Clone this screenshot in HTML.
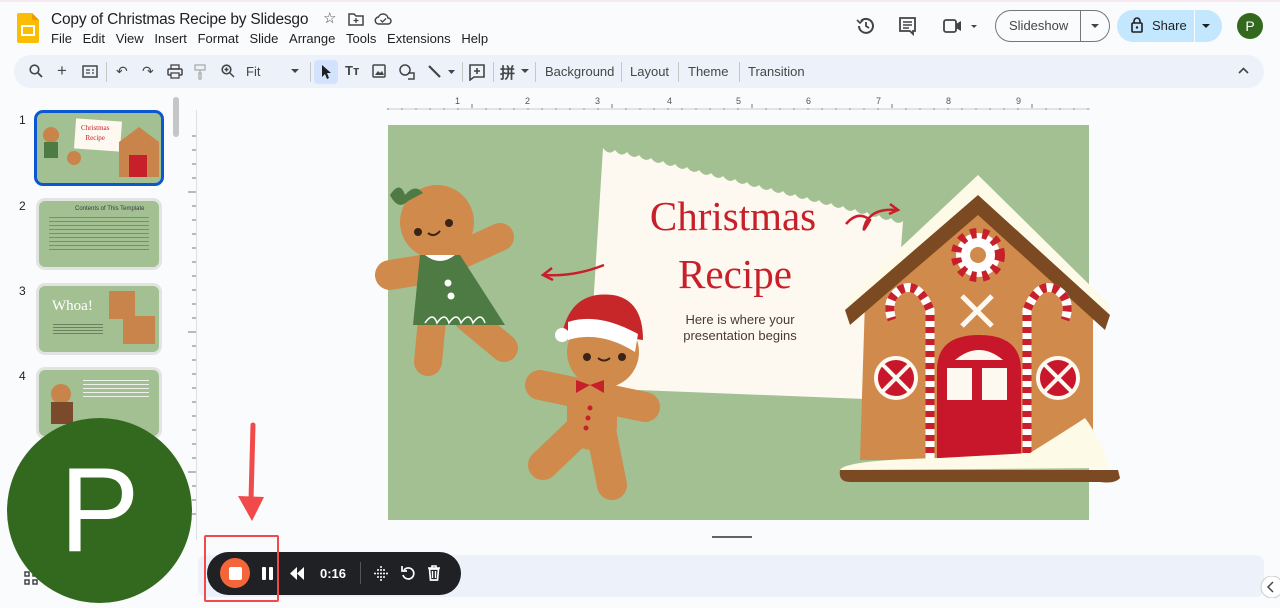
<!DOCTYPE html>
<html><head><meta charset="utf-8"><style>
*{margin:0;padding:0;box-sizing:border-box}
body{width:1280px;height:608px;overflow:hidden;background:#f9fbfd;font-family:"Liberation Sans",Arial,sans-serif;position:relative;color:#1f1f1f}
.a{position:absolute}
.menu span{margin-right:10.7px}
.tb{font-size:13px;color:#444746}
.sep{position:absolute;top:62px;width:1px;height:20px;background:#c7c7c7}
.rn{position:absolute;top:96px;font-size:9px;color:#555}
</style></head><body>
<div class="a" style="left:0;top:0;width:1280px;height:2px;background:#f6e8ee"></div>
<svg class="a" style="left:17px;top:13px" width="22" height="30" viewBox="0 0 22 30"><path d="M2 0h13l7 7v21a2 2 0 0 1-2 2H2a2 2 0 0 1-2-2V2a2 2 0 0 1 2-2z" fill="#fbbc04"/><path d="M15 0l7 7h-5a2 2 0 0 1-2-2z" fill="#f29900"/><rect x="5" y="13" width="12" height="9" fill="none" stroke="#fff" stroke-width="2"/></svg>
<div class="a" style="left:51px;top:11px;font-size:15.5px;letter-spacing:-0.2px">Copy of Christmas Recipe by Slidesgo</div>
<div class="a" style="left:323px;top:9px;font-size:15px;color:#444">☆</div>
<svg class="a" style="left:348px;top:12px" width="16" height="14"><path d="M1 2h5l2 2h7v9H1z" fill="none" stroke="#444" stroke-width="1.5"/><path d="M8 6v5M5.5 8.5h5" stroke="#444" stroke-width="1.3"/></svg>
<svg class="a" style="left:374px;top:12px" width="18" height="14"><path d="M5 12h9a3 3 0 0 0 0-6 5 5 0 0 0-9.5-1A3.5 3.5 0 0 0 5 12z" fill="none" stroke="#444" stroke-width="1.5"/><path d="M6.5 8l2 2 3.5-3.5" fill="none" stroke="#444" stroke-width="1.3"/></svg>
<div class="a menu" style="left:51px;top:31px;font-size:13px;white-space:nowrap"><span>File</span><span>Edit</span><span>View</span><span>Insert</span><span>Format</span><span>Slide</span><span>Arrange</span><span>Tools</span><span>Extensions</span><span>Help</span></div>
<svg class="a" style="left:856px;top:16px" width="20" height="20" viewBox="0 0 20 20"><path d="M3 10a7 7 0 1 0 2-5" fill="none" stroke="#444" stroke-width="2"/><path d="M1 4l3 3 3-3" fill="none" stroke="#444" stroke-width="1.6"/><path d="M10 6v4l3 2" fill="none" stroke="#444" stroke-width="1.8"/></svg>
<svg class="a" style="left:898px;top:16px" width="20" height="20"><path d="M2 2h15v13h-2v3l-3-3H2z" fill="none" stroke="#444" stroke-width="1.8"/><path d="M5 6h9M5 9h9M5 12h6" stroke="#444" stroke-width="1.5"/></svg>
<svg class="a" style="left:942px;top:17px" width="36" height="18"><rect x="2" y="3" width="12" height="12" rx="2" fill="none" stroke="#444" stroke-width="1.8"/><path d="M14 7l5-3v10l-5-3" fill="#444"/><path d="M29 8l3 3 3-3z" fill="#444"/></svg>
<div class="a" style="left:995px;top:10px;width:115px;height:32px;border:1px solid #747775;border-radius:16px"></div>
<div class="a" style="left:1080px;top:10px;width:1px;height:32px;background:#747775"></div>
<div class="a" style="left:1009px;top:18px;font-size:13px;color:#444746">Slideshow</div>
<svg class="a" style="left:1090px;top:23px" width="10" height="6"><path d="M1 1h8L5 5z" fill="#444"/></svg>
<div class="a" style="left:1117px;top:10px;width:105px;height:32px;background:#c2e7ff;border-radius:16px"></div>
<div class="a" style="left:1194px;top:10px;width:1px;height:32px;background:#f9fbfd"></div>
<svg class="a" style="left:1131px;top:17px" width="12" height="16"><rect x="1" y="6" width="10" height="9" rx="1" fill="none" stroke="#1f1f1f" stroke-width="1.6"/><path d="M3 6V4a3 3 0 0 1 6 0v2" fill="none" stroke="#1f1f1f" stroke-width="1.6"/><circle cx="6" cy="10.5" r="1.2" fill="#1f1f1f"/></svg>
<div class="a" style="left:1152px;top:18px;font-size:13px;color:#1f1f1f">Share</div>
<svg class="a" style="left:1201px;top:23px" width="10" height="6"><path d="M1 1h8L5 5z" fill="#1f1f1f"/></svg>
<div class="a" style="left:1237px;top:13px;width:26px;height:26px;border-radius:50%;background:#33691e;color:#fff;font-size:14px;text-align:center;line-height:26px">P</div>
<!-- toolbar -->
<div class="a" style="left:14px;top:55px;width:1250px;height:33px;background:#edf2fa;border-radius:17px"></div>
<div class="a" style="left:314px;top:60px;width:24px;height:24px;background:#d3e3fd;border-radius:4px"></div>
<svg class="a" style="left:29px;top:64px" width="14" height="14"><circle cx="5.5" cy="5.5" r="4.3" fill="none" stroke="#444" stroke-width="1.6"/><path d="M9 9l4 4" stroke="#444" stroke-width="1.8"/></svg>
<div class="a tb" style="left:57px;top:61px;font-size:17px">+</div>
<svg class="a" style="left:82px;top:65px" width="16" height="13"><rect x="1" y="1" width="14" height="11" fill="none" stroke="#444" stroke-width="1.5"/><path d="M4 5h4M4 8h4M10 5h2M10 8h2" stroke="#444" stroke-width="1.3"/></svg>
<div class="sep" style="left:106px"></div>
<div class="a tb" style="left:116px;top:63px;font-size:14px">↶</div>
<div class="a tb" style="left:142px;top:63px;font-size:14px">↷</div>
<svg class="a" style="left:167px;top:64px" width="16" height="15"><rect x="1" y="5" width="14" height="6" rx="1" fill="none" stroke="#444" stroke-width="1.5"/><rect x="4" y="1" width="8" height="4" fill="none" stroke="#444" stroke-width="1.3"/><rect x="4" y="9" width="8" height="5" fill="#edf2fa" stroke="#444" stroke-width="1.3"/></svg>
<svg class="a" style="left:194px;top:64px" width="12" height="16"><rect x="1" y="1" width="10" height="5" fill="none" stroke="#aaa" stroke-width="1.3"/><path d="M6 6v3M5 9h2v6H5z" fill="none" stroke="#aaa" stroke-width="1.3"/></svg>
<svg class="a" style="left:221px;top:64px" width="14" height="14"><circle cx="5.5" cy="5.5" r="4.3" fill="none" stroke="#444" stroke-width="1.6"/><path d="M9 9l4 4M5.5 3.5v4M3.5 5.5h4" stroke="#444" stroke-width="1.5"/></svg>
<div class="a tb" style="left:246px;top:64px">Fit</div>
<svg class="a" style="left:291px;top:69px" width="9" height="5"><path d="M0 0h8L4 4z" fill="#444"/></svg>
<div class="sep" style="left:310px"></div>
<svg class="a" style="left:320px;top:64px" width="12" height="16"><path d="M2 1v12l3-3 2 5 2-1-2-5h4z" fill="#1f1f1f"/></svg>
<div class="a tb" style="left:345px;top:63px;font-size:13px;font-weight:bold">Tт</div>
<svg class="a" style="left:372px;top:64px" width="14" height="14"><rect x="1" y="1" width="12" height="12" rx="1" fill="none" stroke="#444" stroke-width="1.5"/><path d="M3 11l3-4 2 2 2-2 2 4z" fill="#444"/></svg>
<svg class="a" style="left:398px;top:63px" width="18" height="17"><circle cx="7" cy="7" r="5" fill="none" stroke="#444" stroke-width="1.5"/><path d="M10 10h6v6h-6" fill="none" stroke="#444" stroke-width="1.5"/></svg>
<svg class="a" style="left:427px;top:64px" width="30" height="16"><path d="M2 2l11 11" stroke="#444" stroke-width="2.2"/><path d="M21 6h7l-3.5 4z" fill="#444"/></svg>
<div class="sep" style="left:462px"></div>
<svg class="a" style="left:468px;top:63px" width="18" height="18"><path d="M2 2h14v12H6l-4 3z" fill="none" stroke="#444" stroke-width="1.6"/><path d="M9 5v6M6 8h6" stroke="#444" stroke-width="1.6"/></svg>
<div class="sep" style="left:493px"></div>
<div class="a tb" style="left:500px;top:62px;font-size:15px;font-weight:bold">拼</div>
<svg class="a" style="left:521px;top:69px" width="9" height="5"><path d="M0 0h8L4 4z" fill="#444"/></svg>
<div class="sep" style="left:535px"></div>
<div class="a tb" style="left:545px;top:64px">Background</div>
<div class="sep" style="left:621px"></div>
<div class="a tb" style="left:630px;top:64px">Layout</div>
<div class="sep" style="left:678px"></div>
<div class="a tb" style="left:688px;top:64px">Theme</div>
<div class="sep" style="left:739px"></div>
<div class="a tb" style="left:748px;top:64px">Transition</div>
<svg class="a" style="left:1238px;top:67px" width="11" height="7"><path d="M1 6l4.5-4.5L10 6" fill="none" stroke="#444" stroke-width="1.6"/></svg>
<!-- filmstrip -->
<div class="a" style="left:173px;top:97px;width:6px;height:40px;background:#c4c7c5;border-radius:3px"></div>
<div class="a" style="left:19px;top:113px;font-size:12px">1</div>
<div class="a" style="left:19px;top:199px;font-size:12px">2</div>
<div class="a" style="left:19px;top:284px;font-size:12px">3</div>
<div class="a" style="left:19px;top:369px;font-size:12px">4</div>
<div class="a" style="left:34px;top:110px;width:130px;height:76px;border:3px solid #0b57d0;border-radius:9px;background:#a3c093;overflow:hidden">
<div class="a" style="left:38px;top:7px;width:46px;height:30px;background:#fdf8f0;transform:rotate(4deg)"></div>
<div class="a" style="left:44px;top:10px;font-size:7px;color:#c8202a;font-family:'Liberation Serif',serif;line-height:10px;text-align:center">Christmas<br>Recipe</div>
<div class="a" style="left:82px;top:14px;width:40px;height:50px;background:#c8844a;clip-path:polygon(50% 0,100% 30%,100% 100%,0 100%,0 30%)"></div>
<div class="a" style="left:92px;top:42px;width:18px;height:22px;background:#c8202a"></div>
<div class="a" style="left:6px;top:14px;width:16px;height:16px;border-radius:50%;background:#c8844a"></div>
<div class="a" style="left:7px;top:29px;width:14px;height:16px;background:#4e7a44"></div>
<div class="a" style="left:30px;top:38px;width:14px;height:14px;border-radius:50%;background:#c8844a"></div>
</div>
<div class="a" style="left:36px;top:198px;width:126px;height:72px;border:3px solid #e3e3e3;border-radius:9px;background:#a3c093">
<div class="a" style="left:36px;top:5px;font-size:6px;color:#3a3a3a">Contents of This Template</div>
<div class="a" style="left:10px;top:16px;width:100px;height:34px;background:repeating-linear-gradient(#5b6e52 0 1px,transparent 1px 4px);opacity:.6"></div>
</div>
<div class="a" style="left:36px;top:283px;width:126px;height:72px;border:3px solid #e3e3e3;border-radius:9px;background:#a3c093">
<div class="a" style="left:13px;top:12px;font-size:15px;color:#fff;font-family:'Liberation Serif',serif">Whoa!</div>
<div class="a" style="left:14px;top:38px;width:50px;height:10px;background:repeating-linear-gradient(#47573f 0 1px,transparent 1px 3px);opacity:.6"></div>
<div class="a" style="left:70px;top:5px;width:26px;height:28px;background:#c8844a"></div>
<div class="a" style="left:84px;top:30px;width:32px;height:28px;background:#c8844a"></div>
</div>
<div class="a" style="left:36px;top:367px;width:126px;height:72px;border:3px solid #e3e3e3;border-radius:9px;background:#a3c093">
<div class="a" style="left:12px;top:14px;width:20px;height:20px;border-radius:50%;background:#c8844a"></div>
<div class="a" style="left:12px;top:32px;width:22px;height:22px;background:#7a4a2a"></div>
<div class="a" style="left:44px;top:10px;width:66px;height:18px;background:repeating-linear-gradient(#fff 0 1px,transparent 1px 4px);opacity:.8"></div>
</div>
<!-- rulers -->
<div class="a" style="left:196px;top:110px;width:1px;height:430px;background:#e0e0e0"></div>
<svg class="a" style="left:180px;top:96px" width="920" height="450">
<g stroke="#777" stroke-width="1">
<path d="M208 12v2M222 12v2M236 12v2M250 12v2M264 12v2M278 12v2M292 12v-4M306 12v2M320 12v2M334 12v2M348 12v2M362 12v2M376 12v2M390 12v2M404 12v2M418 12v2M432 12v-4M446 12v2M460 12v2M474 12v2M488 12v2M502 12v2M516 12v2M530 12v2M544 12v2M558 12v2M572 12v-4M586 12v2M600 12v2M614 12v2M628 12v2M642 12v2M656 12v2M670 12v2M684 12v2M698 12v2M712 12v-4M726 12v2M740 12v2M754 12v2M768 12v2M782 12v2M796 12v2M810 12v2M824 12v2M838 12v2M852 12v-4M866 12v2M880 12v2M894 12v2M908 12v2"/>
</g>
<path d="M208 13H910" stroke="#ccc"/>
<g stroke="#777"><path d="M12 40h4M12 54h4M12 68h4M12 82h4M8 96h8M12 110h4M12 124h4M12 138h4M12 152h4M12 166h4M12 180h4M12 194h4M12 208h4M12 222h4M8 236h8M12 250h4M12 264h4M12 278h4M12 292h4M12 306h4M12 320h4M12 334h4M12 348h4M12 362h4M8 376h8M12 390h4M12 404h4M12 418h4"/></g>
</svg>
<div class="rn" style="left:455px">1</div><div class="rn" style="left:525px">2</div><div class="rn" style="left:595px">3</div><div class="rn" style="left:667px">4</div><div class="rn" style="left:736px">5</div><div class="rn" style="left:806px">6</div><div class="rn" style="left:876px">7</div><div class="rn" style="left:946px">8</div><div class="rn" style="left:1016px">9</div>
<!-- slide -->
<div class="a" style="left:388px;top:125px;width:701px;height:395px;background:#a3c093"></div>
<svg class="a" style="left:0;top:0" width="1280" height="608">
<path d="M603 148q6 8 12 2q6 8 12 2q6 8 12 3q6 8 12 3q6 8 12 3q6 8 12 3q6 8 12 3q6 8 12 3q6 8 12 3q6 8 12 3q6 8 12 3q6 8 12 3q6 8 12 3q6 8 12 3q6 8 12 3q6 8 12 3q6 8 12 3q6 8 12 3q6 8 12 3q6 8 12 3q6 8 12 3q6 8 12 3q6 8 12 3q6 8 12 3q6 8 12 3L890 400L588 388z" fill="#fdf8f0"/>
<text x="733" y="230" text-anchor="middle" font-family="Liberation Serif,serif" font-size="41" fill="#c8202a">Christmas</text>
<text x="735" y="288" text-anchor="middle" font-family="Liberation Serif,serif" font-size="41" fill="#c8202a">Recipe</text>
<text x="740" y="324" text-anchor="middle" font-family="Liberation Sans" font-size="13" fill="#4a3a33">Here is where your</text>
<text x="740" y="340" text-anchor="middle" font-family="Liberation Sans" font-size="13" fill="#4a3a33">presentation begins</text>
<path d="M846 224q12-14 24-4q-10 18-4 2q8-14 30-12M890 204l8 6-9 4" fill="none" stroke="#c8202a" stroke-width="2.5"/>
<path d="M604 265q-30 12-60 10M552 268l-9 7 10 5" fill="none" stroke="#c8202a" stroke-width="2.5"/>
<g stroke="#cf8a4c" stroke-linecap="round" fill="none">
<path d="M390 275l50-8" stroke-width="30"/>
<path d="M445 262l55-25" stroke-width="28"/>
<path d="M432 320l-4 42" stroke-width="28"/>
<path d="M468 318l36 30" stroke-width="28"/>
</g>
<circle cx="437" cy="222" r="37" fill="#cf8a4c"/>
<path d="M420 255h40l45 70h-92z" fill="#4e7a44"/>
<path d="M425 255q15 12 30 0z" fill="#fff"/>
<circle cx="448" cy="283" r="3.5" fill="#fff"/><circle cx="451" cy="296" r="3.5" fill="#fff"/>
<path d="M425 323q8-12 12 0q8-12 12 0q8-12 12 0q8-12 12 0q8-12 12 0" fill="none" stroke="#fff" stroke-width="1.5"/>
<path d="M390 195q10-15 15 0q10-12 18-2l-15 8q-10 10-18-6z" fill="#4e7a44"/>
<circle cx="418" cy="232" r="4" fill="#3a2418"/><circle cx="449" cy="223" r="4" fill="#3a2418"/>
<path d="M428 233q6 5 12-2" fill="none" stroke="#3a2418" stroke-width="2"/>
<g stroke="#cf8a4c" stroke-linecap="round" fill="none">
<path d="M540 385l105 22" stroke-width="30"/>
<path d="M592 400l0 25" stroke-width="50"/>
<path d="M585 425l-42 40" stroke-width="30"/>
<path d="M600 425l12 60" stroke-width="30"/>
</g>
<circle cx="603" cy="352" r="36" fill="#cf8a4c"/>
<path d="M563 330q10-40 50-35q30 5 30 45z" fill="#c8272a"/>
<path d="M568 322q30-10 70 12l-3 18q-35-22-67-12z" fill="#fff"/>
<circle cx="562" cy="335" r="7" fill="#fff"/>
<circle cx="587" cy="357" r="4" fill="#3a2418"/><circle cx="622" cy="357" r="4" fill="#3a2418"/>
<path d="M598 358q6 5 12 0" fill="none" stroke="#3a2418" stroke-width="2"/>
<path d="M576 380l14 5-14 8zM604 380l-14 5 14 8z" fill="#c8202a"/>
<circle cx="590" cy="408" r="2.5" fill="#c8202a"/><circle cx="588" cy="418" r="2.5" fill="#c8202a"/><circle cx="586" cy="428" r="2.5" fill="#c8202a"/>
<path d="M865 300L978 190L1093 300V460H860z" fill="#cf8a4c"/>
<path d="M845 300L978 175L1110 305L1105 325L978 210L850 320z" fill="#fdfbe8"/>
<path d="M845 310L978 195L1110 315L1105 330L978 215L850 325z" fill="#7b4a22"/>
<circle cx="978" cy="255" r="22" fill="#fff"/><circle cx="978" cy="255" r="22" fill="none" stroke="#c8202a" stroke-width="10" stroke-dasharray="6 6"/><circle cx="978" cy="255" r="8" fill="#cf8a4c"/>
<path d="M962 296l30 30M992 296l-30 30" stroke="#fdf8f0" stroke-width="5"/>
<path d="M930 465V310q-12-30-30-20q-15 10-8 30" fill="none" stroke="#fff" stroke-width="9"/>
<path d="M930 465V310q-12-30-30-20q-15 10-8 30" fill="none" stroke="#c8202a" stroke-width="9" stroke-dasharray="6 6"/>
<path d="M1027 465V310q12-30 30-20q15 10 8 30" fill="none" stroke="#fff" stroke-width="9"/>
<path d="M1027 465V310q12-30 30-20q15 10 8 30" fill="none" stroke="#c8202a" stroke-width="9" stroke-dasharray="6 6"/>
<path d="M937 465V370q0-35 42-35q42 0 42 35V465z" fill="#c8172a"/>
<path d="M955 360q24-20 48 0z" fill="#fdf8f0"/>
<rect x="947" y="368" width="25" height="32" fill="#fdf8f0"/><rect x="982" y="368" width="25" height="32" fill="#fdf8f0"/>
<circle cx="896" cy="378" r="20" fill="#c8172a" stroke="#fdf8f0" stroke-width="4"/><path d="M883 365l26 26M909 365l-26 26" stroke="#fdf8f0" stroke-width="4"/>
<circle cx="1058" cy="378" r="20" fill="#c8172a" stroke="#fdf8f0" stroke-width="4"/><path d="M1045 365l26 26M1071 365l-26 26" stroke="#fdf8f0" stroke-width="4"/>
<path d="M840 470q5-10 100-12l90-5q40-25 55-35q15 20 25 50z" fill="#fdfbe8"/>
<path d="M840 470h278l2 8q-5 6-20 4H850q-12 0-10-12z" fill="#7b4a22"/>
</svg>
<div class="a" style="left:712px;top:536px;width:40px;height:2px;background:#5f6368"></div>
<div class="a" style="left:198px;top:555px;width:1066px;height:42px;background:#edf2fa;border-radius:8px"></div>
<svg class="a" style="left:1258px;top:576px" width="22" height="22"><circle cx="14" cy="11" r="11" fill="#fff" stroke="#ccc"/><path d="M15 6l-5 5 5 5" fill="none" stroke="#444" stroke-width="1.5"/></svg>
<svg class="a" style="left:24px;top:571px" width="14" height="14"><g fill="none" stroke="#444" stroke-width="1.5"><rect x="1" y="1" width="4" height="4"/><rect x="9" y="1" width="4" height="4"/><rect x="1" y="9" width="4" height="4"/><rect x="9" y="9" width="4" height="4"/></g></svg>
<div class="a" style="left:7px;top:418px;width:185px;height:185px;border-radius:50%;background:#33691e;color:#fff;font-size:120px;text-align:center;line-height:185px">P</div>
<div class="a" style="left:207px;top:552px;width:254px;height:43px;background:#202124;border-radius:22px"></div>
<div class="a" style="left:220px;top:558px;width:30px;height:30px;border-radius:50%;background:#f4663a"></div>
<div class="a" style="left:229px;top:567px;width:13px;height:13px;background:#fff;border-radius:2px"></div>
<div class="a" style="left:262px;top:567px;width:4px;height:13px;background:#fff;border-radius:1px"></div>
<div class="a" style="left:269px;top:567px;width:4px;height:13px;background:#fff;border-radius:1px"></div>
<svg class="a" style="left:289px;top:567px" width="16" height="13"><path d="M8 0v13L1 6.5zM15 0v13L8 6.5z" fill="#fff"/></svg>
<div class="a" style="left:320px;top:566px;font-size:13px;font-weight:bold;color:#fff">0:16</div>
<div class="a" style="left:360px;top:562px;width:1px;height:22px;background:#555"></div>
<svg class="a" style="left:373px;top:566px" width="15" height="15"><g fill="#fff"><circle cx="2" cy="7.5" r="1"/><circle cx="5" cy="4" r="1"/><circle cx="5" cy="7.5" r="1"/><circle cx="5" cy="11" r="1"/><circle cx="8" cy="1" r="1"/><circle cx="8" cy="4" r="1"/><circle cx="8" cy="7.5" r="1"/><circle cx="8" cy="11" r="1"/><circle cx="8" cy="14" r="1"/><circle cx="11" cy="4" r="1"/><circle cx="11" cy="7.5" r="1"/><circle cx="11" cy="11" r="1"/><circle cx="14" cy="7.5" r="1"/></g></svg>
<svg class="a" style="left:400px;top:565px" width="16" height="16"><path d="M4 5a5.5 5.5 0 1 1-1 5" fill="none" stroke="#fff" stroke-width="1.7"/><path d="M2 1v5h5" fill="none" stroke="#fff" stroke-width="1.7"/></svg>
<svg class="a" style="left:427px;top:565px" width="14" height="16"><path d="M1 3h12M5 3V1h4v2" fill="none" stroke="#fff" stroke-width="1.6"/><path d="M2.5 4h9l-1 11h-7z" fill="none" stroke="#fff" stroke-width="1.7"/><path d="M5.5 6v7M8.5 6v7" stroke="#fff" stroke-width="1.4"/></svg>
<div class="a" style="left:204px;top:535px;width:75px;height:67px;border:2px solid #f04a4a;border-radius:2px"></div>
<svg class="a" style="left:230px;top:420px" width="40" height="105"><path d="M23 5L21 80" stroke="#f04a4a" stroke-width="5" stroke-linecap="round"/><path d="M8 76l26 1-12 24z" fill="#f04a4a"/></svg>
</body></html>
